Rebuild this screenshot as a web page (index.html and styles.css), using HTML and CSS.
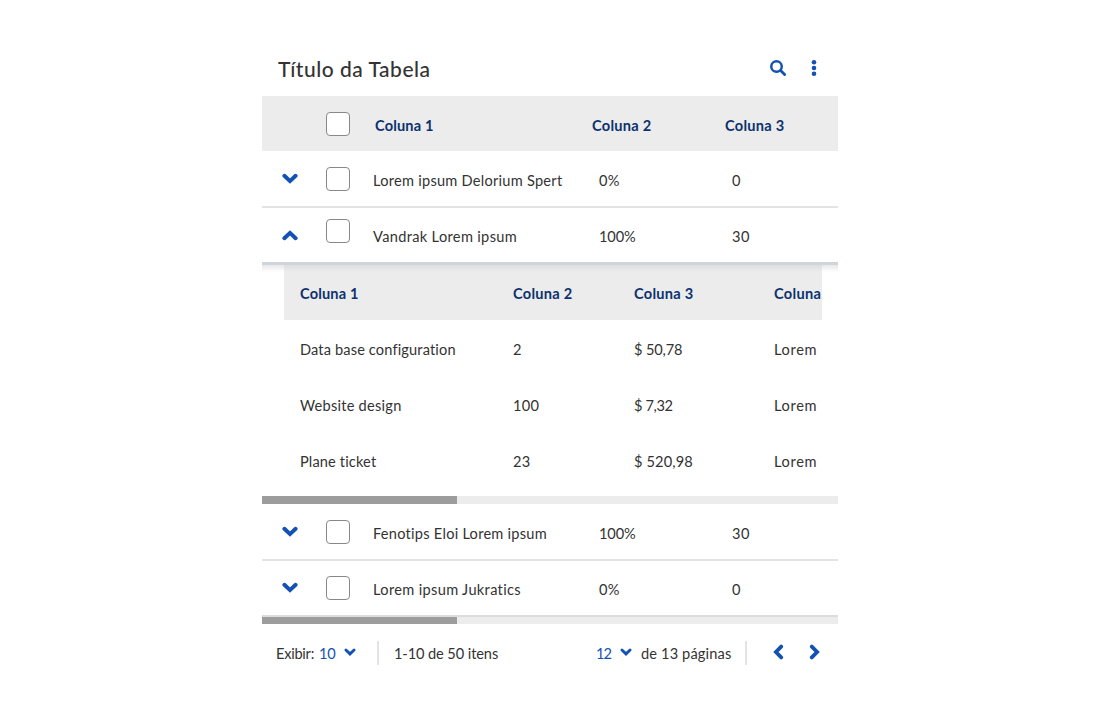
FILE: index.html
```
<!DOCTYPE html>
<html lang="pt-BR">
<head>
<meta charset="utf-8">
<title>Título da Tabela</title>
<link rel="stylesheet" href="styles.css">
</head>
<body>
<svg class="sprite" aria-hidden="true">
  <symbol id="down" viewBox="0 0 16 11"><path d="M2.4 2.8 8 8.1l5.6-5.3" fill="none" stroke="currentColor" stroke-width="4" stroke-linecap="round" stroke-linejoin="miter"/></symbol>
</svg>
<main class="table">
  <header class="top">
    <h1 class="title">Título da Tabela</h1>
    <svg class="search" viewBox="0 0 16 16"><circle cx="6.5" cy="6.5" r="5.25" fill="none" stroke="currentColor" stroke-width="2.5"/><path d="m10.6 10.6 4 4" stroke="currentColor" stroke-width="2.8" stroke-linecap="round"/></svg>
    <svg class="more" viewBox="0 0 6 16"><circle cx="3" cy="2.3" r="2.3"/><circle cx="3" cy="8" r="2.3"/><circle cx="3" cy="13.7" r="2.3"/></svg>
  </header>
  <div class="row head"><i></i><b class="check"></b><span class="t medium">Coluna 1</span><span class="t">Coluna 2</span><span class="t">Coluna 3</span></div>
  <div class="row"><svg class="chev"><use href="#down"/></svg><b class="check"></b><span class="t">Lorem ipsum Delorium Spert</span><span class="t">0%</span><span class="t">0</span></div>
  <div class="row open"><svg class="chev up"><use href="#down"/></svg><b class="check"></b><span class="t wide">Vandrak Lorem ipsum</span><span class="t snug">100%</span><span class="t wider">30</span></div>
  <section class="detail">
    <div class="inner">
      <div class="sub subhead"><span class="t medium">Coluna 1</span><span class="t">Coluna 2</span><span class="t">Coluna 3</span><span class="t wide">Coluna</span></div>
      <div class="sub"><span class="t medium">Data base configuration</span><span class="t">2</span><span class="t snug">$ 50,78</span><span class="t wider">Lorem</span></div>
      <div class="sub"><span class="t">Website design</span><span class="t">100</span><span class="t tight">$ 7,32</span><span class="t wider">Lorem</span></div>
      <div class="sub"><span class="t medium">Plane ticket</span><span class="t">23</span><span class="t medium">$ 520,98</span><span class="t wider">Lorem</span></div>
    </div>
  </section>
  <div class="track"><div class="thumb"></div></div>
  <div class="row"><svg class="chev"><use href="#down"/></svg><b class="check"></b><span class="t">Fenotips Eloi Lorem ipsum</span><span class="t snug">100%</span><span class="t wider">30</span></div>
  <div class="row last"><svg class="chev"><use href="#down"/></svg><b class="check"></b><span class="t wide">Lorem ipsum Jukratics</span><span class="t">0%</span><span class="t">0</span></div>
  <div class="track short"><div class="thumb"></div></div>
  <footer class="foot">
    <div class="show"><span class="t exibir">Exibir:</span><span class="t size">10</span><svg class="mini" viewBox="0 0 16 11"><use href="#down"/></svg></div>
    <span class="t range">1-10 de 50 itens</span>
    <div class="page"><span class="t current">12</span><svg class="mini" viewBox="0 0 16 11"><use href="#down"/></svg><span class="t medium">de 13 páginas</span></div>
    <svg class="nav" viewBox="0 0 11 16"><path d="M8.2 2.6 2.9 8l5.3 5.4" fill="none" stroke="currentColor" stroke-width="3.8" stroke-linecap="round"/></svg>
    <svg class="nav" viewBox="0 0 11 16"><path d="M2.8 2.6 8.1 8l-5.3 5.4" fill="none" stroke="currentColor" stroke-width="3.8" stroke-linecap="round"/></svg>
  </footer>
</main>
</body>
</html>
```
FILE: styles.css
```
* { box-sizing: border-box; }
body { margin: 0; background: #fff; color: #333; font: 14.6px/20px Lato, sans-serif; }
.sprite { display: block; width: 0; height: 0; }
.table { width: 576px; margin: 0 auto; padding-top: 45px; }
.t { white-space: nowrap; justify-self: start; letter-spacing: .25px; }
.t.tight { letter-spacing: -.4px; }
.t.snug { letter-spacing: -.15px; }
.t.medium { letter-spacing: .14px; }
.t.wide { letter-spacing: .33px; }
.t.wider { letter-spacing: .66px; }
.top { display: flex; height: 51px; padding: 0 21px 0 16px; color: #1351b4; }
.title { flex: 1; margin: 11px 0 0; font-size: 21px; line-height: 26px; font-weight: 500; letter-spacing: .51px; color: #333; }
.search { width: 16px; height: 16px; margin: 15px 25px 0 0; }
.more { width: 6px; height: 16px; margin-top: 15px; fill: currentColor; }
.row { display: grid; grid-template-columns: 64px 47px 226px 133px 1fr; height: 57px; padding-top: 16px; align-items: start; border-bottom: 2px solid #e3e3e3; }
.row .t { margin-top: 4px; }
.head { height: 55px; grid-template-columns: 64px 49px 217px 133px 1fr; background: #ececec; border: 0; color: #0c326f; font-weight: 700; }
.check { width: 24px; height: 24px; border: 1px solid #888; border-radius: 4px; background: #fff; }
.chev { width: 16px; height: 11px; margin: 6px 0 0 20px; color: #1351b4; }
.up { transform: rotate(180deg); }
.open { padding-top: 11px; border-bottom: 3px solid #d0d4db; }
.open .t { margin-top: 8px; }
.open .chev { margin-top: 11px; }
.detail { height: 231px; padding: 0 16px 0 22px; background: linear-gradient(#00000018, #00000000 7px); }
.inner { overflow: hidden; }
.sub { display: grid; grid-template-columns: 213px 121px 140px 1fr; height: 56px; padding: 20px 0 0 16px; }
.subhead { height: 55px; padding-top: 19px; background: linear-gradient(#dedede, #ececec 7px); color: #0c326f; font-weight: 700; }
.track { height: 8px; background: #ececec; }
.thumb { width: 195px; height: 100%; background: #9c9c9c; }
.last { height: 56px; padding-top: 15px; border-color: #dcdcdc; }
.short { height: 7px; }
.foot { display: flex; align-items: center; height: 59px; padding: 0 18px 0 14px; }
.show, .page { display: flex; align-items: center; height: 24px; border-right: 2px solid #e3e3e3; }
.show { width: 103px; margin-top: -2px; }
.page { width: 151px; margin: -2px 1px 0 0; }
.show .t, .page .t { margin-top: 2px; }
.t.exibir { width: 43px; letter-spacing: -.25px; }
.t.size { width: 25px; letter-spacing: -.3px; color: #1351b4; }
.t.current { width: 24px; letter-spacing: -.9px; color: #1351b4; }
.mini { width: 12px; height: 8px; margin-top: -2px; color: #1351b4; }
.page .mini { margin-right: 9px; }
.range.t { flex: 1; margin-left: 15px; letter-spacing: -.1px; }
.nav { width: 11px; height: 16px; margin: -4px 0 0 25px; color: #1351b4; }
```
